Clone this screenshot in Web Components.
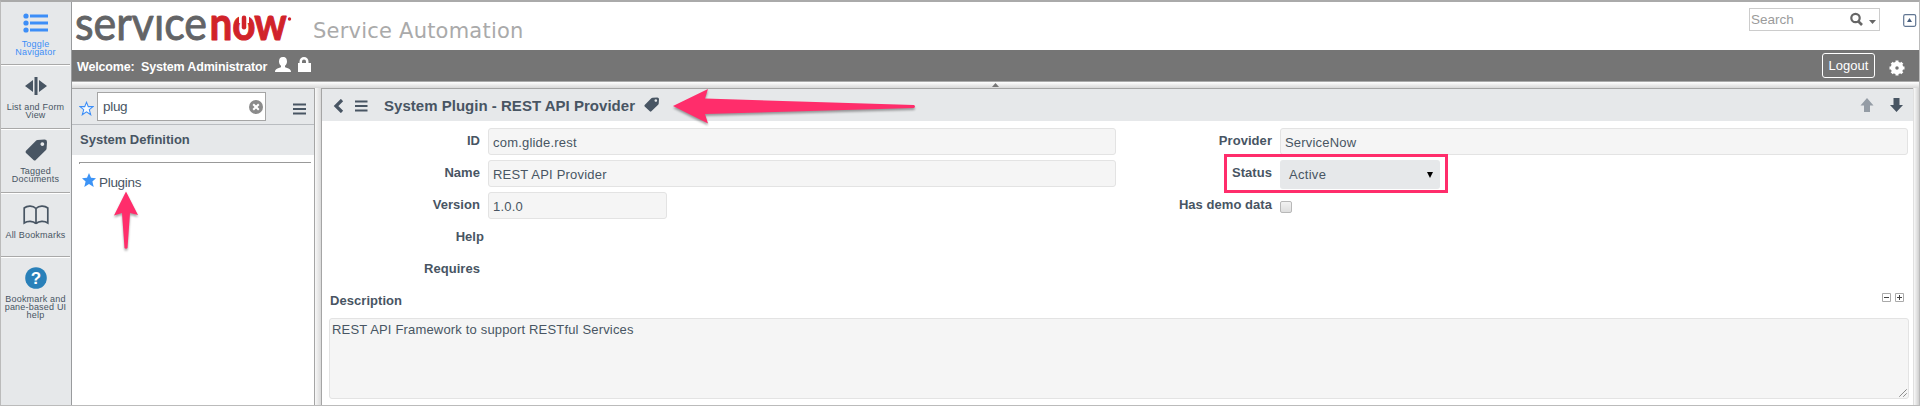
<!DOCTYPE html>
<html lang="en">
<head>
<meta charset="utf-8">
<title>System Plugin - REST API Provider</title>
<style>
html,body{margin:0;height:100%;overflow:hidden}
body{font:14px "Liberation Sans",Arial,sans-serif;color:#485563;background:#fff}
</style>
</head>
<body>
<sn-app></sn-app>
<script>
const define = (name, css, html) => {
  const t = document.createElement('template');
  t.innerHTML = `<style>:host,*{box-sizing:border-box}svg{display:block;flex:none}${css}</style>${html}`;
  customElements.define(name, class extends HTMLElement {
    constructor() {
      super();
      this.attachShadow({mode: 'open'}).append(t.content.cloneNode(true));
    }
  });
};
const tagPath = '<path fill="#485563" fill-rule="evenodd" d="M12.5 1 L19.5 .6 Q22 .6 22 3 L21.600 9.500 Q21.500 10.500 20.700 11.300 L10.800 21 Q9.700 22 8.500 21 L1 14 Q0 13 1 11.800 L10.700 2 Q11.500 1.100 12.500 1Z M17.300 3.200a1.900 1.900 0 1 0 .1 0Z"/>';

define('rail-item', `
:host{display:flex;flex-direction:column;align-items:center;height:64px;border-bottom:1px solid #a9a9a9;box-shadow:0 1px #fff;text-align:center;font-size:9px;line-height:8px;color:#485563;white-space:nowrap;letter-spacing:.2px}
:host(.active){color:#3d8ef7}
:host(.last){border:0;box-shadow:none}
.icon{display:flex;height:38px;align-items:center;justify-content:center;flex:none}
.label{display:block}`,
`<div class="icon"><slot name="icon"></slot></div><div class="label"><slot></slot></div>`);

define('side-rail', `
:host{display:block;width:71px;flex:none;background:#e6e8ea;border-right:1px solid #999b9d}
.list{display:flex;flex-direction:column;margin-right:1px}
rail-item:first-child{height:63px}`,
`<div class="list">
<rail-item class="active"><svg slot="icon" width="26" height="20" viewBox="0 0 26 20" fill="#3d8ef7" style="margin-top:4px"><circle cx="3" cy="3" r="2.600"/><circle cx="3" cy="10" r="2.600"/><circle cx="3" cy="17" r="2.600"/><path d="M7 1.500h18v3H7zM7 8.500h18v3H7zM7 15.500h18v3H7z"/></svg>Toggle<br>Navigator</rail-item>
<rail-item><svg slot="icon" width="22" height="18" viewBox="0 0 22 18" fill="#485563" style="margin-top:3px"><path d="M9.500 0h3v18h-3zM8 3v12L0 9zM14 3v12l8-6z"/></svg>List and Form<br>View</rail-item>
<rail-item><svg slot="icon" width="22" height="22" viewBox="0 0 22 22" style="margin-top:4px">${tagPath}</svg>Tagged<br>Documents</rail-item>
<rail-item><svg slot="icon" width="26" height="20" viewBox="0 0 26 20" fill="none" stroke="#485563" stroke-width="1.700" style="margin-top:6px"><path d="M13 3.500V19M13 3.500C10 .5 4.500.3 1.200 3V18C4.500 15.800 10 15.800 13 18.500M13 3.500C16 .5 21.500.3 24.800 3V18C21.500 15.800 16 15.800 13 18.500"/></svg>All Bookmarks</rail-item>
<rail-item class="last"><svg slot="icon" width="22" height="22" viewBox="0 0 22 22" style="margin-top:4px"><circle cx="11" cy="11" r="10.800" fill="#2980b9"/><text x="11" y="17" text-anchor="middle" font-size="17" font-weight="bold" letter-spacing="0" fill="#fff">?</text></svg>Bookmark and<br>pane-based UI<br>help</rail-item>
</div>`);

define('brand-logo', `
:host{display:block;width:216px;height:48px}
svg{overflow:visible}
text{font-family:Lato,sans-serif;font-size:46px;stroke-linejoin:round}`,
`<svg width="216" height="48" viewBox="0 0 216 48">
<text x="-1" y="37.800" fill="#636466" stroke="#636466" stroke-width=".9" textLength="132" lengthAdjust="spacingAndGlyphs">service</text>
<path d="M70 0h20v13.400H70z" fill="#fff"/>
<g transform="scale(.88 1)"><text y="37.800" text-anchor="middle" font-weight="700" fill="#d1232a" stroke="#d1232a" stroke-width="1"><tspan x="164.800">n</tspan><tspan x="190.900">o</tspan><tspan x="221">w</tspan></text></g>
<path d="M163 11h10v10h-10z" fill="#fff"/><path d="M168 15.800v9.500" stroke="#d1232a" stroke-width="4.500" stroke-linecap="round"/><circle cx="213.500" cy="17" r="1.700" fill="#d1232a"/></svg>`);

define('top-banner', `
:host{display:flex;height:48px;background:#fff;flex:none}
brand-logo{margin-left:4px;flex:none}
.sub{margin:14px 0 0 21px;font:21px/30px "DejaVu Sans",sans-serif;letter-spacing:.22px;color:#aaa;white-space:nowrap}
.search{display:flex;align-items:center;width:131px;height:23px;border:1px solid #ccc;margin:6px 0 0 auto;color:#9b9b9b;padding:0 3px 0 1px;font-size:13.5px}
.search span{flex:1}
.collapse{margin:12px 2px 0 23px}`,
`<brand-logo></brand-logo><div class="sub">Service Automation</div>
<div class="search"><span>Search</span><svg width="28" height="16" viewBox="0 0 28 16"><circle cx="7.500" cy="6" r="4.200" fill="none" stroke="#666" stroke-width="2.200"/><path d="M10.500 9.500 14 13" stroke="#666" stroke-width="2.600"/><path d="M21 8h7l-3.500 4z" fill="#666"/></svg></div>
<svg class="collapse" width="14" height="13" viewBox="0 0 14 13"><rect x=".7" y=".7" width="12" height="11.600" rx="1.500" fill="#fff" stroke="#617692" stroke-width="1.200"/><path d="M4 8h5L6.500 4z" fill="#485f7e"/></svg>`);

define('welcome-bar', `
:host{display:flex;align-items:center;height:32px;flex:none;background:#757575;border-bottom:1px solid #aaa;color:#fff;padding:0 14px 0 5px;white-space:nowrap}
b{font-size:12.5px;letter-spacing:-.17px;padding-top:2px}
.logout{width:53px;height:25px;border:1px solid #fff;border-radius:3px;margin-left:auto;text-align:center;line-height:23px;font-size:13px}
.gear{margin:5px 0 0 14px}`,
`<b>Welcome:&nbsp; System Administrator</b>
<svg width="38" height="16" viewBox="0 0 38 16" fill="#fff" style="margin:-1px 0 0 8px"><path d="M8 0c3 0 4 2 4 4.600 0 2-.8 3.200-2 4.200v1.500c2.500 1 6 1.500 6 4.700H0c0-3.200 3.500-3.700 6-4.700V8.800C4.800 7.800 4 6.600 4 4.600 4 2 5 0 8 0zM23 6h1.500V4.500a4.500 4.500 0 0 1 9 0V6H36v9H23zM27 6h4V4.500a2 2 0 0 0-4 0z"/></svg>
<div class="logout">Logout</div>
<svg class="gear" width="16" height="16" viewBox="-8 -8 16 16"><circle r="4" fill="none" stroke="#fff" stroke-width="4.500"/><path d="M0-7.500V-4M0 7.500V4M-7.500 0H-4M7.500 0H4M-5.300-5.300-3-3M5.300 5.300 3 3M-5.300 5.300-3 3M5.300-5.300 3-3" stroke="#fff" stroke-width="3"/></svg>`);

define('app-navigator', `
:host{display:flex;flex-direction:column;width:243px;flex:none;background:#fff;border-right:1px solid #a5a5a5;border-top:1px solid #a5a5a5}
.filter{display:flex;align-items:center;height:36px;background:#e6e8ea;border-bottom:1px solid #b9bcc0;padding:0 8px 0 7px}
.box{display:flex;align-items:center;width:169px;height:29px;background:#fff;border:1px solid #a5a5a5;margin-left:3px;padding:0 2px 0 5px;font-size:13.5px;letter-spacing:-.3px}
.box span{flex:1}
.title{height:30px;background:#e6e8ea;padding-left:8px;font:bold 13px/30px "Liberation Sans",sans-serif}
.rule{height:2px;margin:7px 3px 0 7px;border-top:1px solid #999;border-left:1px solid #999}
.link{display:flex;align-items:center;margin:7px 0 0 10px;height:22px;gap:3px;font-size:13.5px;letter-spacing:-.3px}`,
`<div class="filter"><svg width="15" height="15" viewBox="0 0 16 16" style="margin-top:4px"><path d="M8 1.300 9.900 6H15l-4 3.300L12.500 14.700 8 11.500 3.500 14.700 5 9.300 1 6h5.100z" fill="#f5faff" stroke="#3d8ef7" stroke-width="1.100"/></svg>
<div class="box"><span>plug</span><svg width="14" height="14" viewBox="0 0 14 14"><circle cx="7" cy="7" r="7" fill="#8b8b8b"/><path d="m4.200 4.200 5.600 5.600m0-5.600L4.200 9.800" stroke="#fff" stroke-width="2"/></svg></div>
<svg width="13" height="12" viewBox="0 0 13 12" style="margin:4px 0 0 auto"><path d="M0 1.500h13M0 6h13M0 10.500h13" stroke="#485563" stroke-width="2"/></svg></div>
<div class="title">System Definition</div><div class="rule"></div>
<div class="link"><svg width="14" height="14" viewBox="0 0 14 14" style="margin-top:-4px"><path d="M7 0 9 4.700 14 5.200 10.400 8.600 11.700 14 7 11 2.300 14 3.600 8.600 0 5.200 5 4.700z" fill="#3d94f6"/></svg><span>Plugins</span></div>`);

define('form-field', `
:host{display:flex;height:32px;align-items:flex-start}
.label{width:var(--label,158px);padding-right:8px;text-align:right;font:bold 13px/26px "Liberation Sans",sans-serif;letter-spacing:.05px;flex:none;white-space:nowrap}
.value{flex:1;display:flex}`,
`<div class="label"><slot name="label"></slot></div><div class="value"><slot></slot></div>`);

define('text-value', `
:host{display:block;flex:1;height:27px;background:#f5f5f5;border:1px solid #e3e3e3;border-radius:3px;padding-left:4px;line-height:27px;font-size:13px;letter-spacing:.2px;white-space:nowrap}`,
`<slot></slot>`);

define('form-header', `
:host{display:flex;align-items:center;height:32px;flex:none;background:#e6e8ea;padding:0 10px 0 11px}
h1{font-size:15px;letter-spacing:.02px;margin:1px 9px 0 16px;white-space:nowrap}`,
`<svg width="35" height="14" viewBox="0 0 35 14" fill="none" stroke="#485563" style="margin-top:2px"><path d="M9 1 3 7l6 6" stroke-width="3.200"/><path d="M22 2.500h12.500M22 7h12.500M22 11.500h12.500" stroke-width="2"/></svg>
<h1>System Plugin - REST API Provider</h1>
<svg width="15" height="15" viewBox="0 0 22 22" style="margin-top:-1px">${tagPath}</svg>
<svg width="43" height="14" viewBox="0 0 43 14" style="margin:-1px 0 0 auto"><path d="M7 0l6.500 7.500H10V14H4V7.500H.5z" fill="#949ca5"/><path d="M36.500 14l6.500-7h-3.500V0h-6v7H30z" fill="#485563"/></svg>`);

define('record-form', `
:host{display:flex;flex-direction:column;flex:1;background:#fff;border:1px solid #a5a5a5;border-width:1px 0 0 1px;min-width:0}
.cols{display:grid;grid-template-columns:786px 1fr;padding:7px 5px 0 8px;height:167px;flex:none}
.col{display:flex;flex-direction:column;min-width:0}
.right{--label:164px}
.help{--label:162px}
.sel{display:flex;align-items:center;width:160px;height:29px;background:#e6e8ea;border-radius:3px;padding:0 7px 0 9px;justify-content:space-between;font-size:13px;letter-spacing:.3px}
.chk{width:12px;height:12px;border:1px solid #b8b8b8;border-radius:2px;background:linear-gradient(#f2f2f2,#dedede);margin-top:9px}
.desc{display:flex;justify-content:space-between;height:22px;flex:none;margin:0 9px 0 8px}
.desc b{font-size:13px;line-height:26px;letter-spacing:.05px}
.area{height:81px;flex:none;margin:8px 4px 0 7px;background:#f5f5f5;border:1px solid #e3e3e3;border-radius:3px;padding:1px 1px 1px 2px;font-size:13px;line-height:19px;letter-spacing:.17px;display:flex;justify-content:space-between}
.area svg{align-self:flex-end}`,
`<form-header></form-header>
<div class="cols"><div class="col">
<form-field><span slot="label">ID</span><text-value>com.glide.rest</text-value></form-field>
<form-field><span slot="label">Name</span><text-value>REST API Provider</text-value></form-field>
<form-field><span slot="label">Version</span><text-value style="flex:0 0 179px">1.0.0</text-value></form-field>
<form-field class="help"><span slot="label">Help</span></form-field>
<form-field><span slot="label">Requires</span></form-field>
</div><div class="col right">
<form-field><span slot="label">Provider</span><text-value>ServiceNow</text-value></form-field>
<form-field><span slot="label">Status</span><div class="sel"><span>Active</span><svg width="6" height="6"><path d="M0 0h6L3 6z" fill="#000"/></svg></div></form-field>
<form-field><span slot="label">Has demo data</span><div class="chk"></div></form-field>
</div></div>
<div class="desc"><b>Description</b><svg width="22" height="9" viewBox="0 0 22 9" fill="none" style="margin-top:5px"><path d="M.5.5h8v8h-8zM13.500.5h8v8h-8z" stroke="#aaa"/><path d="M2 4.500h5M15 4.500h5M17.500 2v5" stroke="#444"/></svg></div>
<div class="area"><span>REST API Framework to support RESTful Services</span><svg width="8" height="8" viewBox="0 0 8 8" stroke="#555"><path d="M.5 7.500l7-7M4.500 7.500l3-3" stroke-dasharray="1.200 .3"/></svg></div>`);

define('mark-up', `
:host{position:absolute;inset:-2px -1px -1px;pointer-events:none}
svg{filter:drop-shadow(0 2px 1px rgba(0,0,0,.35))}
.plain{position:absolute;left:1224px;top:154px;width:224px;height:39px;border:3px solid #ff2d6b}`,
`<svg width="1920" height="406" viewBox="0 0 1920 406" fill="#ff2d6b"><path d="M673 106 708 89 705 98.500 914 105Q916 106.500 914 108L705 114 708 123.500Z"/><path d="M126 191.500 138 215 130 213 127.500 248Q126 249.500 124.500 248L122 213 114 215.500Z"/></svg><div class="plain"></div>`);

define('sn-app', `
:host{display:flex;position:relative;width:1920px;height:406px;border:1px solid #bbb;border-top:2px solid #aaa}
.main{display:flex;flex-direction:column;flex:1;min-width:0}
.hsplit{height:6px;background:linear-gradient(#fff,#d8d8d8);display:flex;justify-content:center;align-items:center;flex:none}
.panes{display:flex;flex:1;min-height:0}
.vsplit{width:6px;background:linear-gradient(90deg,#f8f8f8,#d9d9d9);flex:none}
.gutter{width:6px;border-left:1px solid #e0e0e0;background:linear-gradient(90deg,#f8f8f8,#d0d0d0);flex:none}`,
`<side-rail></side-rail><div class="main"><top-banner></top-banner><welcome-bar></welcome-bar>
<div class="hsplit"><svg width="7" height="4"><path d="M0 4h7L3.500 0z" fill="#777"/></svg></div>
<div class="panes"><app-navigator></app-navigator><div class="vsplit"></div><record-form></record-form><div class="gutter"></div></div></div><mark-up></mark-up>`);
</script>
</body>
</html>
